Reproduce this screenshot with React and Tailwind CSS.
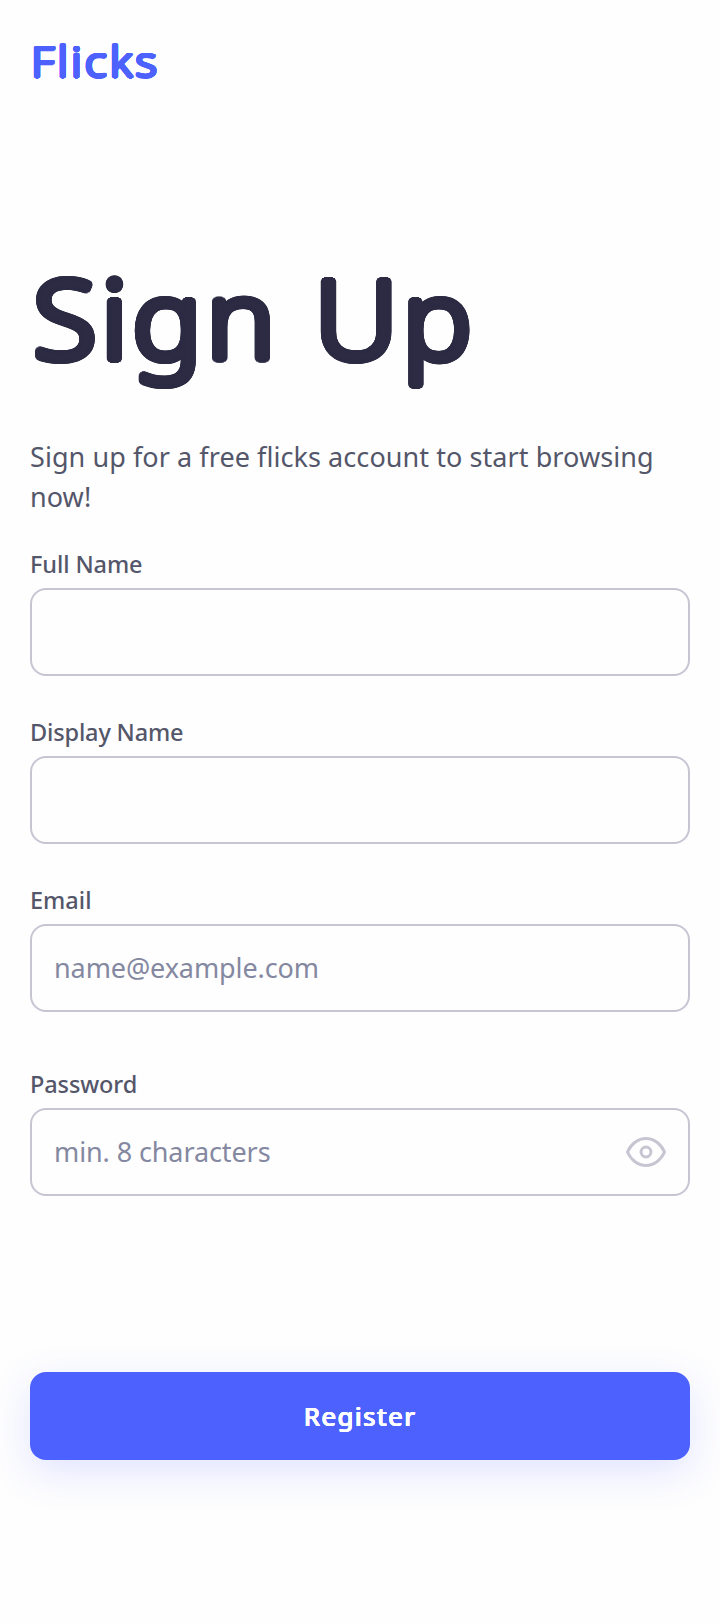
// Rings the glyphs with solid shadows so that light strokes turn into heavy ones with round ends.
const roundedEdge = (radius, color) =>
  Array.from({ length: 24 }, (_, i) => {
    const a = (i * Math.PI) / 12;
    return `${(radius * Math.cos(a)).toFixed(2)}px ${(radius * Math.sin(a)).toFixed(2)}px 0 ${color}`;
  }).join(",");

function Field({ label, type = "text", placeholder, className = "", labelClass = "", children }) {
  return (
    <label className={`block ${className}`}>
      <span className={`block h-8 text-[23.5px] leading-8 font-medium ${labelClass}`}>{label}</span>
      <span className="mt-2 flex h-[88px] items-center rounded-2xl border-2 border-[#c8c5d3] pr-[21px] pl-[22px]">
        <input
          type={type}
          placeholder={placeholder}
          className="min-w-0 flex-1 bg-transparent text-[27px] leading-10 tracking-[-0.1px] outline-none placeholder:text-[#8488a1] placeholder:opacity-100"
        />
        {children}
      </span>
    </label>
  );
}

function EyeIcon() {
  return (
    <svg viewBox="0 0 42 32" className="h-8 w-[42px] fill-none stroke-[#c8c5d3] stroke-3" strokeLinejoin="round">
      <path d="M2.5 16C6 8 13 2.6 21 2.6S36 8 39.5 16C36 24 29 29.4 21 29.4S6 24 2.5 16Z" />
      <circle cx="21" cy="16" r="4.9" />
    </svg>
  );
}

export default function App() {
  return (
    <main className="flex min-h-[1624px] w-full flex-col bg-[#fefefe] px-[30px] font-['Noto_Sans',sans-serif] text-[#54566a]">
      <header className="pt-[29px]">
        <p
          className="origin-left scale-x-[1.08] pl-px text-[42.5px] leading-[64px] font-light tracking-[2.8px] text-[#4d61ff]"
          style={{ textShadow: roundedEdge(1.5, "#4d61ff") }}
        >
          Flicks
        </p>
      </header>
      <h1
        className="mt-[150px] origin-left scale-x-[1.07] pl-[3px] text-[108px] leading-[150px] font-light tracking-[4.3px] text-[#2c2b43]"
        style={{ textShadow: roundedEdge(4, "#2c2b43") }}
      >
        Sign Up
      </h1>
      <p className="mt-11 h-20 text-[27px] leading-10 tracking-[0.07px]">
        Sign up for a free flicks account to start browsing now!
      </p>
      <form className="mt-[31px]">
        <Field label="Full Name" labelClass="tracking-[-0.1px]" />
        <Field label="Display Name" className="mt-10" labelClass="tracking-[-0.15px]" />
        <Field label="Email" type="email" placeholder="name@example.com" className="mt-10" />
        <Field label="Password" type="password" placeholder="min. 8 characters" className="mt-14" labelClass="tracking-[-0.1px]">
          <EyeIcon />
        </Field>
        <button
          type="button"
          className="mt-44 block h-[88px] w-full rounded-2xl bg-[#4d61ff] text-[26px] leading-10 font-medium tracking-[1.2px] text-white shadow-[0_12px_40px_rgba(77,97,255,0.17)]"
          style={{ textShadow: roundedEdge(0.4, "rgba(255,255,255,0.25)") }}
        >
          Register
        </button>
      </form>
    </main>
  );
}
